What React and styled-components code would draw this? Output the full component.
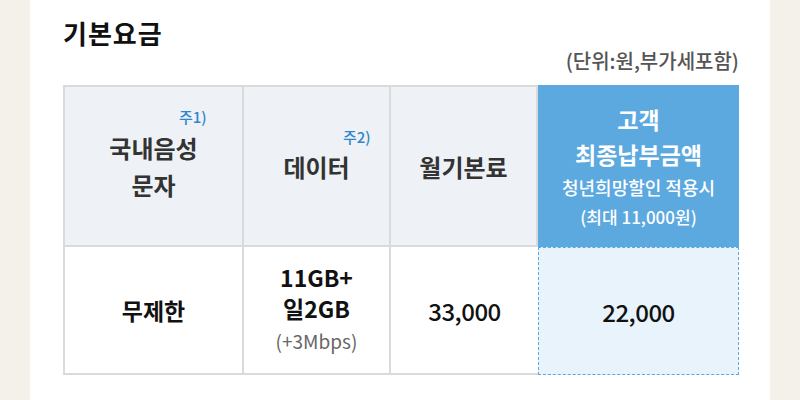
import React from 'react'
import styled, { createGlobalStyle } from 'styled-components'

const GlobalStyle = createGlobalStyle`
  html, body {
    margin: 0;
    padding: 0;
    background: #f3f1ea;
    font-family: "Noto Sans CJK KR", "Noto Sans", sans-serif;
  }
`

const Page = styled.div`
  width: 740px;
  height: 400px;
  margin: 0 30px;
  background: #fff;
  padding: 14px 31px 0 33px;
  box-sizing: border-box;
`

const Title = styled.h2`
  margin: 0;
  font-size: 26px;
  font-weight: 700;
  line-height: 38px;
  color: #111;
  letter-spacing: 1px;
`

const Unit = styled.div`
  text-align: right;
  font-size: 20px;
  font-weight: 500;
  line-height: 26px;
  color: #555;
  margin-top: -4px;
  margin-bottom: 11px;
`

const Grid = styled.div`
  display: grid;
  grid-template-columns: 181px 147px 147px 201px;
  grid-template-rows: 162px 128px;
  width: 676px;
`

const HeadCell = styled.div`
  box-sizing: border-box;
  display: flex;
  flex-direction: column;
  align-items: center;
  justify-content: center;
  text-align: center;
  background: #eef2f6;
  border-top: 2px solid #dadada;
  border-bottom: 2px solid #dadada;
  border-right: 2px solid #dadada;
  border-left: ${p => (p.$first ? '2px solid #dadada' : 'none')};
  color: #333;
  font-size: 24px;
  font-weight: 700;
  line-height: 37px;
`

const HighHead = styled.div`
  box-sizing: border-box;
  display: flex;
  flex-direction: column;
  align-items: center;
  justify-content: center;
  text-align: center;
  background: #5ca9e0;
  color: #fff;
  font-size: 23px;
  font-weight: 700;
  line-height: 35px;
`

const BodyCell = styled.div`
  box-sizing: border-box;
  display: flex;
  flex-direction: column;
  align-items: center;
  justify-content: center;
  text-align: center;
  background: #fff;
  border-bottom: 2px solid #dadada;
  border-right: ${p => (p.$noRight ? 'none' : '2px solid #dadada')};
  border-left: ${p => (p.$first ? '2px solid #dadada' : 'none')};
  color: #111;
  font-size: 23px;
  font-weight: 700;
  line-height: 31px;
`

const HighBody = styled(BodyCell)`
  background: #e8f3fb;
  border: 1px dashed #5ca9e0;
`

const Num = styled.span`
  font-size: 24px;
  font-weight: 500;
  letter-spacing: -0.5px;
`

const Label = styled.span`
  position: relative;
  display: inline-block;
`

const Note = styled.sup`
  position: absolute;
  right: ${p => p.$right}px;
  top: ${p => p.$top}px;
  font-size: 15px;
  line-height: 16px;
  font-weight: 500;
  color: #2f86cc;
  white-space: nowrap;
`

const Small = styled.div`
  font-size: 18px;
  line-height: 29px;
  font-weight: 500;
  margin-top: 1px;
`

const Smaller = styled.span`
  font-size: 17px;
`

const Sub = styled.div`
  font-size: 19px;
  font-weight: 400;
  color: #666;
  line-height: 34px;
`

const App = () => {
  return (
    <>
      <GlobalStyle />
      <Page>
        <Title>기본요금</Title>
        <Unit>(단위:원,부가세포함)</Unit>
        <Grid>
          <HeadCell $first>
            <Label>
              <Note $right={-9} $top={-20}>주1)</Note>
              국내음성<br />문자
            </Label>
          </HeadCell>
          <HeadCell>
            <Label>
              <Note $right={-21} $top={-19}>주2)</Note>
              데이터
            </Label>
          </HeadCell>
          <HeadCell>월기본료</HeadCell>
          <HighHead>
            <div>고객<br />최종납부금액</div>
            <Small>
              청년희망할인 적용시<br />
              <Smaller>(최대 11,000원)</Smaller>
            </Small>
          </HighHead>

          <BodyCell $first>무제한</BodyCell>
          <BodyCell>
            <div>11GB+<br />일2GB</div>
            <Sub>(+3Mbps)</Sub>
          </BodyCell>
          <BodyCell $noRight><Num>33,000</Num></BodyCell>
          <HighBody><Num>22,000</Num></HighBody>
        </Grid>
      </Page>
    </>
  )
}

export default App
